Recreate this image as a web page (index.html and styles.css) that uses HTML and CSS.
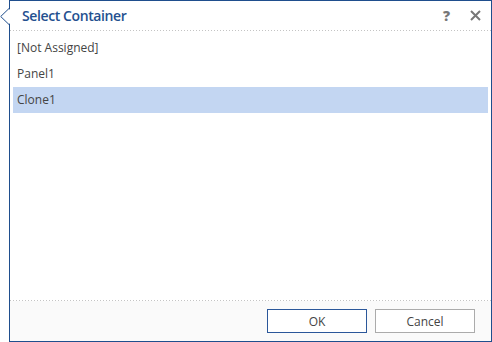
FILE: index.html
```html
<!DOCTYPE html>
<html lang="en">

<head>
  <meta charset="UTF-8">
  <title>Select Container</title>
  <link rel="stylesheet" href="styles.css">
</head>

<body>
  <div class="popup">
    <!-- Callout pointer -->
    <svg class="pointer" width="11" height="18" viewBox="0 0 11 18">
      <polygon points="10.5,0.5 1,8.5 10.5,16.5" fill="#fff" />
      <polyline points="9.5,0 0.7,8.5 9.5,17" fill="none" stroke="#1f4e8d" stroke-width="1" />
    </svg>

    <div class="dialog">
      <div class="header">
        <span class="title">Select Container</span>
        <div class="header-tools">
          <span class="help">?</span>
          <svg class="close" width="11" height="11" viewBox="0 0 11 11">
            <path d="M1 1 L10 10 M10 1 L1 10" stroke="#777" stroke-width="2" />
          </svg>
        </div>
      </div>
      <div class="sep"></div>

      <div class="list">
        <div class="list-item">[Not Assigned]</div>
        <div class="list-item">Panel1</div>
        <div class="list-item selected">Clone1</div>
      </div>

      <div class="sep"></div>
      <div class="footer">
        <button class="btn btn-primary" type="button">OK</button>
        <button class="btn" type="button">Cancel</button>
      </div>
    </div>
  </div>
</body>

</html>
```

FILE: styles.css
```css
* {
  margin: 0;
  padding: 0;
  box-sizing: border-box;
  font-family: 'Open Sans', 'Noto Sans', sans-serif;
}

body {
  background-color: #fff;
}

.popup {
  position: relative;
  width: 492px;
  height: 342px;
  padding-left: 9px;
}

.pointer {
  position: absolute;
  left: 0;
  top: 8px;
}

.dialog {
  height: 100%;
  border: 1px solid #1f4e8d;
  background-color: #fff;
  display: flex;
  flex-direction: column;
}

.header {
  height: 29px;
  display: flex;
  align-items: center;
  justify-content: space-between;
  padding: 0 10px 0 12px;
}

.title {
  font-size: 14px;
  font-weight: 600;
  color: #24508f;
  letter-spacing: -0.4px;
}

.header-tools {
  display: flex;
  align-items: center;
  gap: 20px;
}

.help {
  font-size: 14px;
  font-weight: 800;
  color: #777;
}

.sep {
  height: 1px;
  background-image: linear-gradient(to right, #c4c4c4 1px, transparent 1px);
  background-size: 3px 1px;
}

.list {
  flex: 1;
  padding: 4px 3px;
}

.list-item {
  height: 26px;
  line-height: 26px;
  padding-left: 4px;
  font-size: 12px;
  color: #444;
}

.list-item.selected {
  background-color: #c3d6f2;
}

.footer {
  height: 40px;
  background-color: #fafafa;
  display: flex;
  justify-content: flex-end;
  gap: 8px;
  padding: 8px 16px 0 0;
}

.btn {
  width: 100px;
  height: 24px;
  background-color: #fff;
  border: 1px solid #ababab;
  font-size: 12px;
  color: #444;
  cursor: pointer;
}

.btn-primary {
  border-color: #2b579a;
}
```
